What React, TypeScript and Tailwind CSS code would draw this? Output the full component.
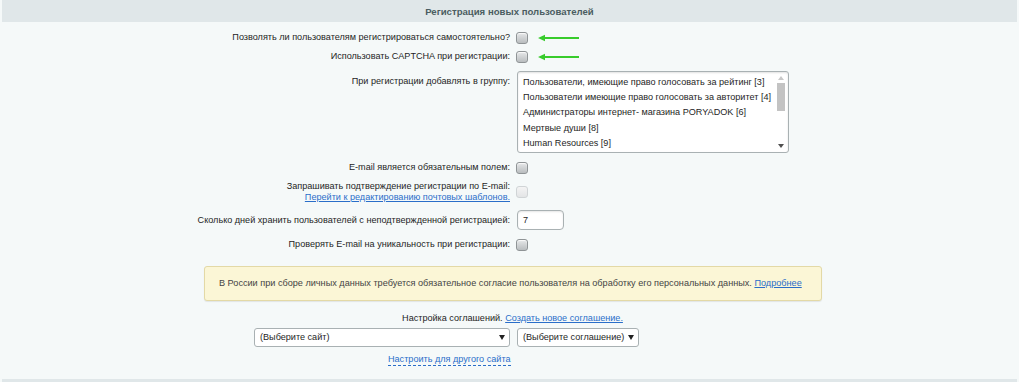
import React from "react";

const Checkbox = ({ disabled = false }: { disabled?: boolean }) => (
  <span
    className={
      disabled
        ? "inline-block w-[12px] h-[12px] rounded-[3px] border border-[#d0d4d6] bg-gradient-to-b from-[#f4f4f4] to-[#e3e5e6]"
        : "inline-block w-[12px] h-[12px] rounded-[3px] border border-[#8f9496] bg-gradient-to-b from-[#e6e8e9] to-[#b9bdbf] shadow-[inset_0_1px_1px_rgba(255,255,255,0.8)]"
    }
  />
);

const Arrow = () => (
  <svg width="44" height="8" viewBox="0 0 44 8" className="ml-[9px]">
    <path d="M1 4 L8 0.8 L8 3 L42 3 L42 5 L8 5 L8 7.2 Z" fill="#38cc2c" />
  </svg>
);

const Row = ({
  label,
  children,
  className = "",
  align = "center",
}: {
  label: React.ReactNode;
  children?: React.ReactNode;
  className?: string;
  align?: "center" | "start";
}) => (
  <div className={`flex ${align === "center" ? "items-center" : "items-start"} ${className}`}>
    <div className="w-[516px] shrink-0 text-right pr-[6px]">{label}</div>
    <div className="flex items-center">{children}</div>
  </div>
);

const groups = [
  "Пользователи, имеющие право голосовать за рейтинг [3]",
  "Пользователи имеющие право голосовать за авторитет [4]",
  "Администраторы интернет- магазина PORYADOK [6]",
  "Мертвые души [8]",
  "Human Resources [9]",
];

export default function App() {
  return (
    <div
      className="w-[1019px] h-[382px] overflow-hidden bg-[#f5f9f9] text-[#1e1e1e] text-[9.1px] leading-[11px]"
      style={{ fontFamily: '"Liberation Sans", Arial, sans-serif' }}
    >
      <div className="h-[22px] mx-[2px] bg-[#e0e7e9] flex items-center justify-center text-[#4b5d61] font-bold text-[9.6px]">
        Регистрация новых пользователей
      </div>
      <div className="pt-[6px]">
        <Row label="Позволять ли пользователям регистрироваться самостоятельно?" className="h-[19px]">
          <Checkbox />
          <Arrow />
        </Row>
        <Row label="Использовать CAPTCHA при регистрации:" className="h-[19px]">
          <Checkbox />
          <Arrow />
        </Row>
        <Row label={<div className="pt-[5px]">При регистрации добавлять в группу:</div>} align="start" className="pt-[5px]">
          <div className="ml-px w-[272px] h-[82px] bg-white border border-[#a9b1b3] rounded-[3px] shadow-[inset_0_1px_2px_rgba(0,0,0,0.12)] flex overflow-hidden">
            <div className="flex-1 pl-[5px] pt-[3px] flex flex-col overflow-hidden">
              {groups.map((g) => (
                <div key={g} className="h-[15.2px] leading-[15px] whitespace-nowrap">
                  {g}
                </div>
              ))}
            </div>
            <div className="w-[10px] mr-[2px] my-[1px] flex flex-col items-center shrink-0">
              <svg width="6" height="4" viewBox="0 0 6 4" className="mt-[3px]">
                <path d="M0 4 L3 0 L6 4 Z" fill="#c8c8c8" />
              </svg>
              <div className="w-[8px] h-[28px] mt-[3px] bg-[#c3c3c3]" />
              <div className="flex-1" />
              <svg width="6" height="4" viewBox="0 0 6 4" className="mb-[3px]">
                <path d="M0 0 L3 4 L6 0 Z" fill="#505050" />
              </svg>
            </div>
          </div>
        </Row>
        <Row label="E-mail является обязательным полем:" className="h-[19px] mt-[5px]">
          <Checkbox />
        </Row>
        <Row
          label={
            <div className="leading-[11px]">
              <div>Запрашивать подтверждение регистрации по E-mail:</div>
              <div className="text-[#2a6ec9] underline">Перейти к редактированию почтовых шаблонов.</div>
            </div>
          }
          className="pt-[4px] pb-[3px]"
        >
          <Checkbox disabled />
        </Row>
        <Row label="Сколько дней хранить пользователей с неподтвержденной регистрацией:" className="pt-[4px] pb-[4px]">
          <div className="ml-px w-[47px] h-[20px] bg-white border border-[#a9b1b3] rounded-[4px] shadow-[inset_0_1px_2px_rgba(0,0,0,0.1)] pl-[5px] flex items-center">
            7
          </div>
        </Row>
        <Row label="Проверять E-mail на уникальность при регистрации:" className="h-[19px] mt-[1px]">
          <Checkbox />
        </Row>

        <div className="ml-[204px] mt-[12px] w-[618px] h-[35px] bg-[#fbf6d6] border border-[#e3d9a6] rounded-[3px] shadow-[0_1px_1px_rgba(0,0,0,0.08)] flex items-center pl-[14px] text-[#444] text-[9.15px] whitespace-nowrap">
          В России при сборе личных данных требуется обязательное согласие пользователя на обработку его персональных данных.&nbsp;
          <span className="text-[#2a6ec9] underline">Подробнее</span>
        </div>

        <div className="flex justify-center mt-[11px] pl-[6px] h-[13px] items-center">
          <span>Настройка соглашений.&nbsp;</span>
          <span className="text-[#2a6ec9] underline">Создать новое соглашение.</span>
        </div>
        <div className="flex mt-[2px] h-[20px] items-center">
          <div className="w-[516px] shrink-0 flex justify-end pr-[6px]">
            <div className="w-[256px] h-[19px] bg-white border border-[#a9b1b3] rounded-[3px] flex items-center justify-between pl-[5px] pr-[4px]">
              <span>(Выберите сайт)</span>
              <svg width="6" height="5" viewBox="0 0 6 5"><path d="M0 0 L6 0 L3 5 Z" fill="#222" /></svg>
            </div>
          </div>
          <div className="ml-px w-[122px] h-[19px] bg-white border border-[#a9b1b3] rounded-[3px] flex items-center justify-between pl-[5px] pr-[4px] whitespace-nowrap">
            <span>(Выберите соглашение)</span>
            <svg width="6" height="5" viewBox="0 0 6 5"><path d="M0 0 L6 0 L3 5 Z" fill="#222" /></svg>
          </div>
        </div>
        <div className="flex justify-start pl-[388px] mt-[6px] h-[13px]">
          <span className="text-[#2a6ec9] border-b border-dashed border-[#2a6ec9] leading-[12px]">
            Настроить для другого сайта
          </span>
        </div>
      </div>
      <div className="mt-[13px] h-[10px] mx-[2px] bg-[#e0e7e9]" />
    </div>
  );
}
